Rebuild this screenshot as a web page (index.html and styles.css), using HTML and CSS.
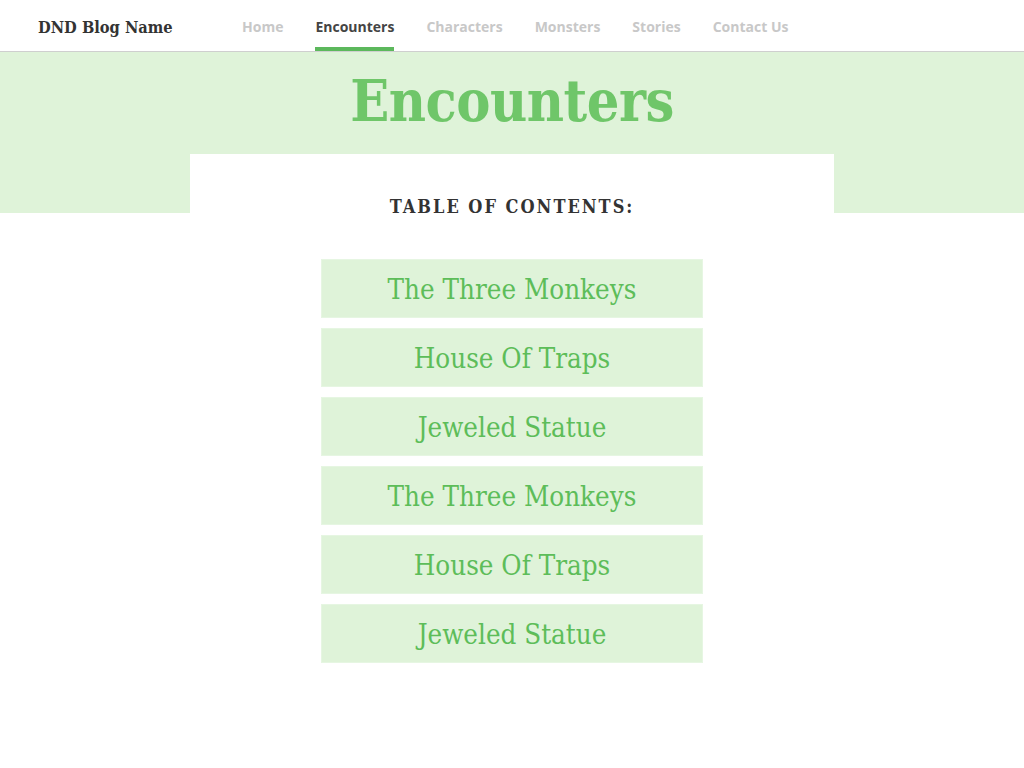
FILE: index.html
```html
<!DOCTYPE html>
<html lang="en">
<head>
<meta charset="utf-8">
<title>Encounters - DND Blog Name</title>
<link rel="stylesheet" href="styles.css">
</head>
<body>
<header class="site-header">
  <div class="logo">DND Blog Name</div>
  <nav class="nav">
    <a class="nav-link" href="#">Home</a>
    <a class="nav-link active" href="#">Encounters</a>
    <a class="nav-link" href="#">Characters</a>
    <a class="nav-link" href="#">Monsters</a>
    <a class="nav-link" href="#">Stories</a>
    <a class="nav-link" href="#">Contact Us</a>
  </nav>
</header>
<section class="hero">
  <h1 class="hero-title">Encounters</h1>
</section>
<main class="content-wrap">
  <div class="card">
    <h2 class="toc-title">Table of Contents:</h2>
    <ul class="toc-list">
      <li><a class="toc-item" href="#">The Three Monkeys</a></li>
      <li><a class="toc-item" href="#">House Of Traps</a></li>
      <li><a class="toc-item" href="#">Jeweled Statue</a></li>
      <li><a class="toc-item" href="#">The Three Monkeys</a></li>
      <li><a class="toc-item" href="#">House Of Traps</a></li>
      <li><a class="toc-item" href="#">Jeweled Statue</a></li>
    </ul>
  </div>
</main>
</body>
</html>
```

FILE: styles.css
```css
* { box-sizing: border-box; }
html, body { margin: 0; padding: 0; background: #fff; }
body { font-family: "Open Sans", "DejaVu Sans", sans-serif; }

.site-header {
  display: flex;
  align-items: center;
  height: 52px;
  padding-left: 38px;
  border-bottom: 1px solid #cfcfcf;
}
.logo {
  font-family: "DejaVu Serif", serif;
  font-stretch: condensed;
  font-weight: 700;
  font-size: 16.3px;
  color: #333;
  width: 204px;
  padding-top: 4px;
  white-space: nowrap;
}
.nav { display: flex; gap: 32px; height: 51px; }
.nav-link {
  display: flex;
  align-items: center;
  height: 51px;
  padding-top: 6px;
  border-bottom: 4px solid transparent;
  font-size: 14px;
  font-weight: 700;
  color: #c8c8c8;
  text-decoration: none;
}
.nav-link.active { color: #444; border-bottom-color: #5cb85c; }

.hero {
  background: #dff3d9;
  height: 102px;
  text-align: center;
}
.hero-title {
  margin: 0;
  padding-top: 13px;
  font-family: "DejaVu Serif", serif;
  font-stretch: condensed;
  font-weight: 700;
  font-size: 57px;
  line-height: 72px;
  letter-spacing: -0.5px;
  color: #6fc669;
}

.content-wrap {
  background: linear-gradient(#dff3d9 0, #dff3d9 59px, #fff 59px);
  padding-bottom: 100px;
}
.card {
  width: 644px;
  margin: 0 auto;
  background: #fff;
  padding-top: 40px;
}
.toc-title {
  margin: 0;
  text-align: center;
  font-family: "DejaVu Serif", serif;
  font-stretch: condensed;
  font-weight: 700;
  font-size: 18px;
  line-height: 26px;
  letter-spacing: 2px;
  text-transform: uppercase;
  color: #333;
}
.toc-list {
  list-style: none;
  margin: 39px auto 0;
  padding: 0;
  width: 382px;
  display: flex;
  flex-direction: column;
  gap: 10px;
}
.toc-item {
  display: flex;
  align-items: center;
  justify-content: center;
  height: 59px;
  background: #dff3d9;
  border: 1px solid #e6f6e2;
  font-family: "DejaVu Serif", serif;
  font-stretch: condensed;
  font-weight: 300;
  font-size: 27.5px;
  color: #5dbd59;
  text-decoration: none;
}
```
